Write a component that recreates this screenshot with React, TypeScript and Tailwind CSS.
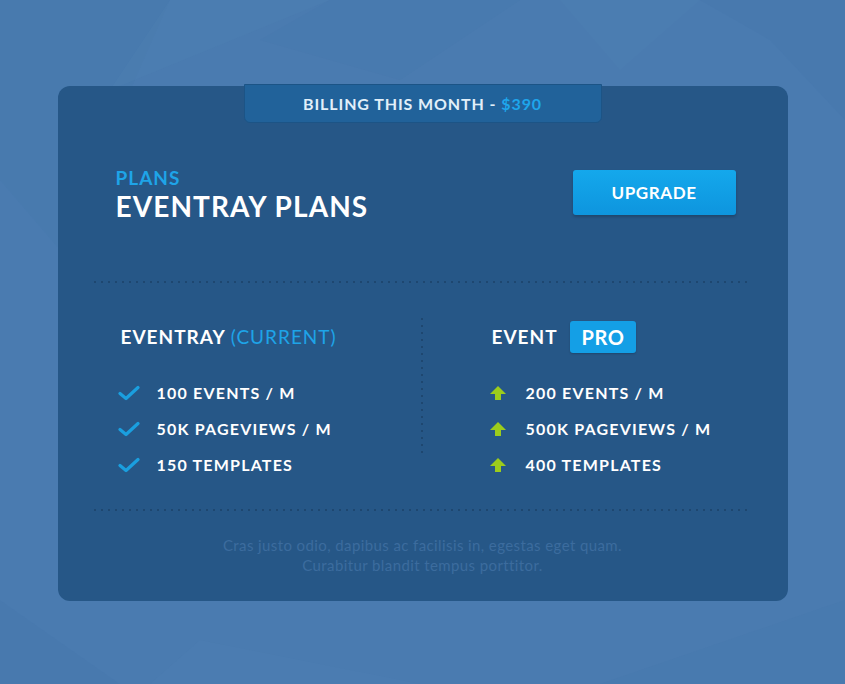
import React from 'react';

const CheckIcon: React.FC = () => (
  <svg width="22" height="16" viewBox="0 0 22 16" className="shrink-0">
    <path d="M2 8.5 L8 13.5 L20 2.5" fill="none" stroke="#1a9fdf" strokeWidth="3.2" strokeLinecap="round" strokeLinejoin="round" />
  </svg>
);

const ArrowIcon: React.FC = () => (
  <svg width="18" height="16" viewBox="0 0 18 16" className="shrink-0">
    <path d="M9 1 L17 9 L12 9 L12 15 L6 15 L6 9 L1 9 Z" fill="#9ccc1c" />
  </svg>
);

const Dots: React.FC<{ className?: string }> = ({ className }) => (
  <div className={`h-[2px] bg-[repeating-linear-gradient(to_right,#1e4770_0_2px,transparent_2px_7px)] ${className ?? ''}`} />
);

const current = ['100 Events / M', '50K Pageviews / M', '150 Templates'];
const pro = ['200 Events / M', '500K Pageviews / M', '400 Templates'];

export default function App() {
  return (
    <div className="relative min-h-screen w-full overflow-hidden bg-[#4a7bb0] flex justify-center pt-[86px] font-['Lato',sans-serif]">
      {/* faint background facets */}
      <svg className="absolute inset-0 w-full h-full" viewBox="0 0 845 684" preserveAspectRatio="none">
        <polygon points="0,0 170,0 60,250 0,180" fill="#4577ad" opacity="0.35" />
        <polygon points="170,0 330,0 110,90" fill="#4f80b4" opacity="0.3" />
        <polygon points="330,0 520,0 400,80 260,40" fill="#4678ad" opacity="0.3" />
        <polygon points="700,0 845,0 845,120 770,40" fill="#4576ab" opacity="0.35" />
        <polygon points="560,0 700,0 620,70" fill="#4f80b4" opacity="0.3" />
        <polygon points="0,600 120,684 0,684" fill="#4576ab" opacity="0.35" />
        <polygon points="600,684 845,600 845,684" fill="#4678ad" opacity="0.3" />
        <polygon points="200,640 420,684 150,684" fill="#4f80b4" opacity="0.25" />
      </svg>

      <div className="relative w-[730px] h-[515px] rounded-xl bg-[#265787] flex flex-col">
        {/* billing tab */}
        <div className="absolute -top-[2px] left-[186px] w-[358px] h-[39px] rounded-b-md bg-[#21629a] border border-[#1c5486] flex items-center justify-center text-[16px] font-bold uppercase tracking-[0.9px] text-[#e1eff9]">
          Billing this month -&nbsp;<span className="text-[#1ea6ec]">$390</span>
        </div>

        {/* header */}
        <div className="flex justify-between items-start pl-[58px] pr-[52px] pt-[80px] h-[195px]">
          <div className="flex flex-col">
            <span className="text-[19px] leading-[24px] font-bold uppercase tracking-[1px] text-[#1ea4e8]">Plans</span>
            <span className="text-[28px] leading-[32px] font-bold uppercase tracking-[1.1px] text-white">Eventray Plans</span>
          </div>
          <button className="mt-[4px] w-[163px] h-[45px] rounded-[3px] bg-gradient-to-b from-[#14a8ec] to-[#0e95de] shadow-[0_2px_3px_rgba(0,0,0,0.2)] text-white text-[17px] font-bold uppercase tracking-[0.6px]">
            Upgrade
          </button>
        </div>

        <Dots className="mx-[36px]" />

        {/* plans */}
        <div className="flex h-[226px] pt-[36px]">
          <div className="w-[363px] pl-[60px] flex flex-col">
            <div className="h-[36px] flex items-center pl-[3px] text-[19px] font-bold uppercase tracking-[1px] text-white">
              Eventray&nbsp;<span className="font-normal text-[#1ea4e8]">(Current)</span>
            </div>
            <div className="flex flex-col mt-[27px] gap-[14px]">
              {current.map((t) => (
                <div key={t} className="flex items-center h-[22px]">
                  <CheckIcon />
                  <span className="ml-[17px] text-[16px] font-bold uppercase text-white tracking-[1.2px]">{t}</span>
                </div>
              ))}
            </div>
          </div>
          <div className="w-[2px] h-[138px] -mt-[1px] bg-[repeating-linear-gradient(to_bottom,#1e4770_0_2px,transparent_2px_7px)]" />
          <div className="flex-1 pl-[66px] flex flex-col">
            <div className="h-[36px] flex items-center pl-[3px] text-[19px] font-bold uppercase tracking-[1px] text-white">
              Event
              <span className="ml-[12px] px-[12px] h-[32px] flex items-center rounded-[3px] bg-[#149fe6] shadow-[0_1px_2px_rgba(0,0,0,0.2)] text-[20px] tracking-[0.5px]">Pro</span>
            </div>
            <div className="flex flex-col mt-[27px] gap-[14px]">
              {pro.map((t) => (
                <div key={t} className="flex items-center h-[22px]">
                  <ArrowIcon />
                  <span className="ml-[19px] text-[16px] font-bold uppercase text-white tracking-[1.2px]">{t}</span>
                </div>
              ))}
            </div>
          </div>
        </div>

        <Dots className="mx-[36px]" />

        <p className="mt-[24px] text-center text-[15px] leading-[20px] tracking-[0.4px] text-[#3c6c9e]">
          Cras justo odio, dapibus ac facilisis in, egestas eget quam.
          <br />
          Curabitur blandit tempus porttitor.
        </p>
      </div>
    </div>
  );
}
